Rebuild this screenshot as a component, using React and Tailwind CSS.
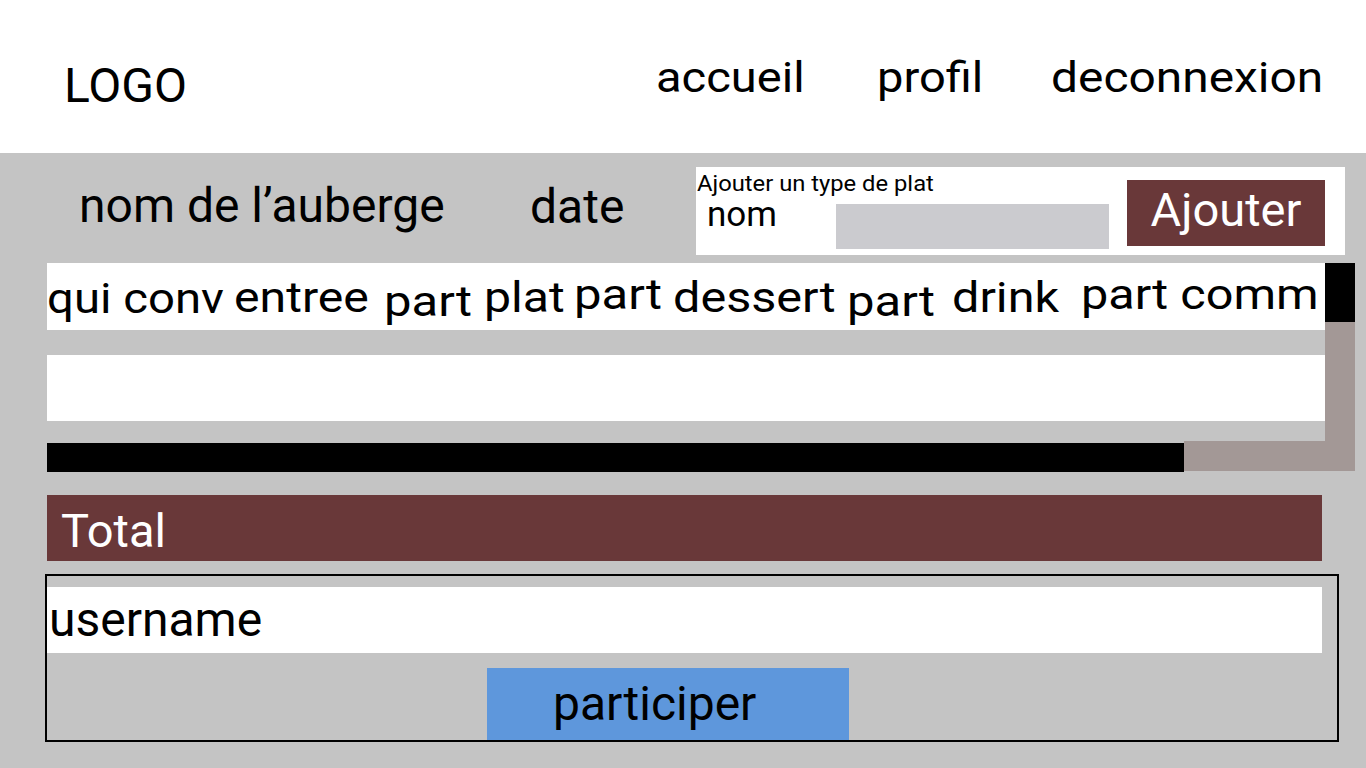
export default function App() {
  const cols = [
    { t: "qui conv", w: "w-[187px]", pt: "pt-[14px]", s: "scale-x-[1.1]" },
    { t: "entree", w: "w-[150px]", pt: "pt-[13px]", s: "scale-x-[1.12]" },
    { t: "part", w: "w-[100px]", pt: "pt-[17px]", s: "scale-x-[1.14]" },
    { t: "plat", w: "w-[90px]", pt: "pt-[13px]", s: "scale-x-[1.12]" },
    { t: "part", w: "w-[99px]", pt: "pt-[10px]", s: "scale-x-[1.14]" },
    { t: "dessert", w: "w-[174px]", pt: "pt-[13px]", s: "scale-x-[1.13]" },
    { t: "part", w: "w-[105px]", pt: "pt-[17px]", s: "scale-x-[1.14]" },
    { t: "drink", w: "w-[129px]", pt: "pt-[13px]", s: "scale-x-[1.13]" },
    { t: "part comm", w: "w-[197px]", pt: "pt-[10px]", s: "scale-x-[1.13]" },
  ];
  return (
    <div className="h-[768px] w-[1366px] overflow-hidden bg-[#c4c4c4] font-['Roboto',sans-serif] text-black">
      <header className="flex h-[153px] bg-white">
        <div className="w-[656px] shrink-0 pl-[64px] pt-[62px] text-[48px] leading-none">LOGO</div>
        <nav className="flex pt-[57px] text-[42px] leading-none">
          <div className="w-[221px]">
            <span className="inline-block origin-left scale-x-[1.12]">accueil</span>
          </div>
          <div className="w-[174px]">
            <span className="inline-block origin-left scale-x-[1.12]">profil</span>
          </div>
          <div>
            <span className="inline-block origin-left scale-x-[1.14]">deconnexion</span>
          </div>
        </nav>
      </header>

      <main className="pl-[47px]">
        <div className="flex h-[110px] items-start">
          <div className="ml-[32px] w-[451px] shrink-0 pt-[29px] text-[48px] leading-none">nom de l’auberge</div>
          <div className="w-[166px] shrink-0 pt-[30px] text-[48px] leading-none">date</div>
          <div className="mt-[14px] flex h-[88px] w-[649px] shrink-0 items-start bg-white">
            <div className="flex w-[413px] flex-col">
              <div className="pl-[1px] pt-[6px] text-[22px] leading-none">
                <span className="inline-block origin-left scale-x-[1.08]">Ajouter un type de plat</span>
              </div>
              <div className="mt-[2px] flex items-start">
                <div className="w-[140px] pl-[11px] text-[35px] leading-none">nom</div>
                <div className="mt-[7px] h-[45px] w-[273px] bg-[#cbcbcf]" />
              </div>
            </div>
            <div className="ml-[18px] mt-[13px] flex h-[66px] w-[198px] items-start justify-center bg-[#693839] pt-[6px] text-[47px] leading-none text-white">
              Ajouter
            </div>
          </div>
        </div>

        <div className="flex w-[1308px] flex-col">
          <div className="flex">
            <div className="flex w-[1278px] flex-col">
              <div className="flex h-[67px] bg-white text-[43px] leading-none">
                {cols.map((c, i) => (
                  <div key={i} className={`${c.w} ${c.pt} shrink-0 whitespace-nowrap`}>
                    <span className={`inline-block origin-left ${c.s}`}>{c.t}</span>
                  </div>
                ))}
              </div>
              <div className="mt-[25px] h-[66px] bg-white" />
            </div>
            <div className="flex h-[178px] w-[30px] flex-col bg-[#a39896]">
              <div className="h-[59px] bg-black" />
            </div>
          </div>
          <div className="flex h-[30px]">
            <div className="mt-[2px] h-[29px] w-[1137px] bg-black" />
            <div className="flex-1 bg-[#a39896]" />
          </div>
        </div>

        <div className="mt-[24px] h-[66px] w-[1275px] bg-[#693839] pl-[14px] pt-[12px] text-[47px] leading-none text-white">
          Total
        </div>

        <div className="-ml-[2px] mt-[13px] h-[168px] w-[1294px] border-2 border-black">
          <div className="mt-[11px] h-[66px] w-[1275px] bg-white pl-[2px] pt-[9px] text-[48px] leading-none">
            username
          </div>
          <div className="ml-[440px] mt-[15px] h-[72px] w-[362px] bg-[#5e97dc] pl-[66px] pt-[12px] text-[48px] leading-none">
            participer
          </div>
        </div>
      </main>
    </div>
  );
}
